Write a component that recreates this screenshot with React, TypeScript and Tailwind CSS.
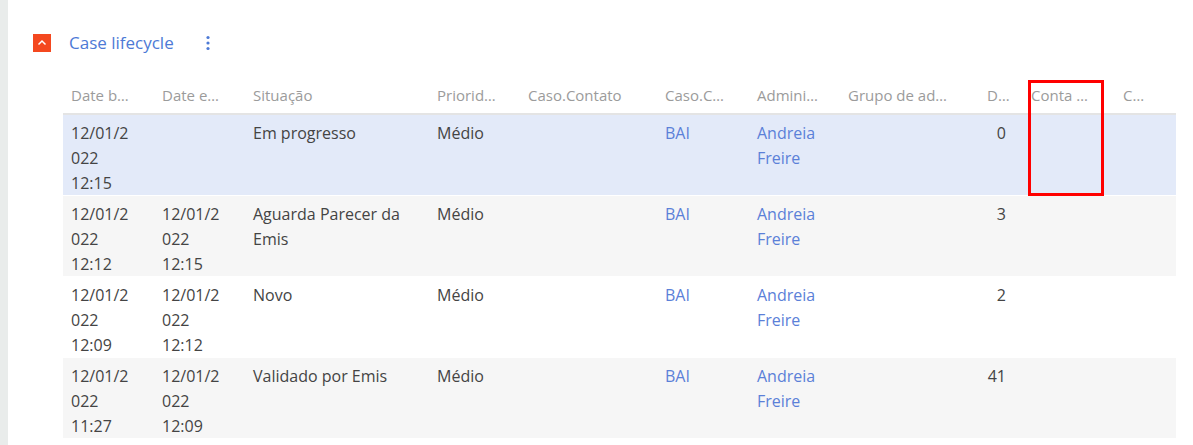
import React from 'react';

type Row = {
    start: string;
    end: string;
    status: string;
    priority: string;
    company: string;
    admin: string;
    days: string;
    selected?: boolean;
};

const rows: Row[] = [
    { start: '12/01/2022 12:15', end: '', status: 'Em progresso', priority: 'Médio', company: 'BAI', admin: 'Andreia Freire', days: '0', selected: true },
    { start: '12/01/2022 12:12', end: '12/01/2022 12:15', status: 'Aguarda Parecer da Emis', priority: 'Médio', company: 'BAI', admin: 'Andreia Freire', days: '3' },
    { start: '12/01/2022 12:09', end: '12/01/2022 12:12', status: 'Novo', priority: 'Médio', company: 'BAI', admin: 'Andreia Freire', days: '2' },
    { start: '12/01/2022 11:27', end: '12/01/2022 12:09', status: 'Validado por Emis', priority: 'Médio', company: 'BAI', admin: 'Andreia Freire', days: '41' },
];

const headers = [
    'Date b…', 'Date e…', 'Situação', 'Priorid…', 'Caso.Contato', 'Caso.C…',
    'Admini…', 'Grupo de ad…', 'D…', 'Conta …', 'C…',
];

const cols = 'grid grid-cols-[91px_91px_184px_91px_137px_92px_91px_137px_46px_92px_61px]';

export default function App() {
    return (
        <div className="h-[445px] w-[1193px] flex bg-white font-['Open_Sans',sans-serif] overflow-hidden">
            {/* left gutter */}
            <div className="w-[8px] shrink-0 bg-[#e9eceb]" />

            <div className="flex-1 pl-[25px] pt-[34px]">
                {/* Section header */}
                <div className="flex items-center h-[18px]">
                    <button className="w-[18px] h-[18px] bg-[#f4481f] flex items-center justify-center">
                        <svg width="12" height="12" viewBox="0 0 12 12" fill="none">
                            <path d="M2.5 7.5 L6 4 L9.5 7.5" stroke="white" strokeWidth="1.5" />
                        </svg>
                    </button>
                    <span className="ml-[18px] -mt-[2px] text-[17px] text-[#4d7ad6] leading-none">Case lifecycle</span>
                    <svg className="ml-[31px]" width="6" height="16" viewBox="0 0 6 16">
                        <circle cx="3" cy="2.5" r="1.6" fill="#4d7ad6" />
                        <circle cx="3" cy="8" r="1.6" fill="#4d7ad6" />
                        <circle cx="3" cy="13.5" r="1.6" fill="#4d7ad6" />
                    </svg>
                </div>

                {/* Table */}
                <div className="relative ml-[30px] mt-[28px] w-[1113px]">
                    <div className={`${cols} h-[35px] pb-[3px] items-center border-b-2 border-[#e4e4e4] text-[15px] text-[#9b9b9b] whitespace-nowrap`}>
                        {headers.map((h, i) => (
                            <div key={i} className={i === 8 ? 'pl-[10px] pr-[17px] text-right' : 'pl-[8px]'}>{h}</div>
                        ))}
                    </div>

                    {rows.map((r, i) => (
                        <div
                            key={i}
                            className={`${cols} h-[81px] pt-[6px] border-b border-white text-[16px] leading-[25px] text-[#444] ${
                                r.selected ? 'bg-[#e3eaf9]' : i % 2 === 1 ? 'bg-[#f6f6f6]' : 'bg-white'
                            }`}
                        >
                            <div className="pl-[8px] pr-[23px] break-words">{r.start}</div>
                            <div className="pl-[8px] pr-[23px] break-words">{r.end}</div>
                            <div className="pl-[8px] pr-[8px]">{r.status}</div>
                            <div className="pl-[8px]">{r.priority}</div>
                            <div className="pl-[8px]" />
                            <div className="pl-[8px] text-[#5b80d8]">{r.company}</div>
                            <div className="pl-[8px] pr-[20px] text-[#5b80d8]">{r.admin}</div>
                            <div className="pl-[8px]" />
                            <div className="pr-[17px] text-right">{r.days}</div>
                            <div />
                            <div />
                        </div>
                    ))}

                    {/* highlight box */}
                    <div className="absolute left-[965px] top-0 w-[76px] h-[116px] border-[3px] border-[#ff0000]" />
                </div>
            </div>
        </div>
    );
}
